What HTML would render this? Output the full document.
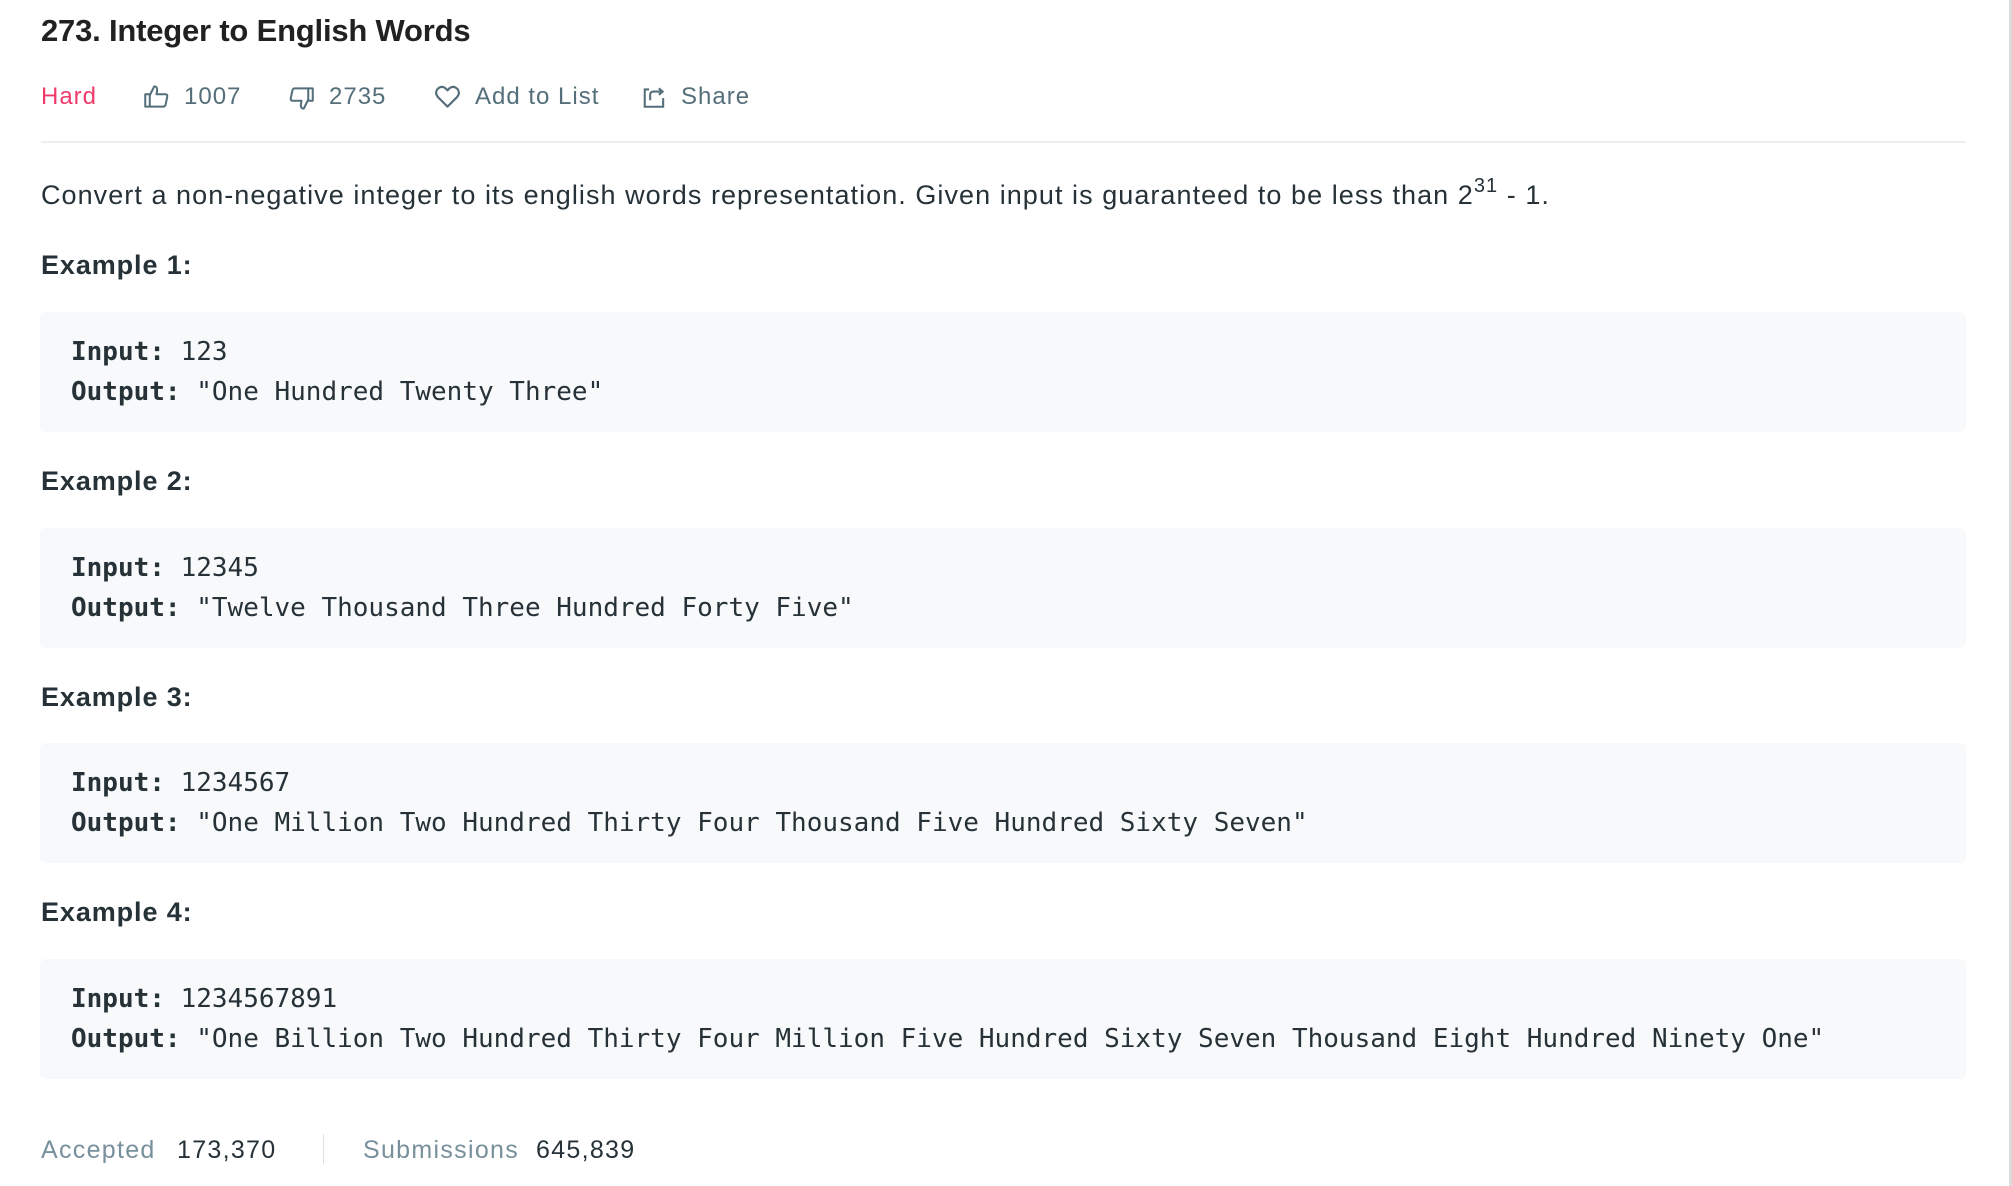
<!DOCTYPE html>
<html><head><meta charset="utf-8">
<style>
html,body{margin:0;padding:0;background:#fff;width:2012px;height:1186px;overflow:hidden;position:relative;font-family:"Liberation Sans",sans-serif;color:#263238}
.a{position:absolute;white-space:nowrap}
.title{left:41px;top:12px;font-size:31px;color:#212121;line-height:38px;font-weight:bold;letter-spacing:-0.2px}
.meta{top:82px;font-size:24px;color:#546e7a;line-height:30px;letter-spacing:1px}
.hard{color:#ef3a6a}
.div{position:absolute;left:41px;width:1925px;top:141px;height:2px;background:#eceff1}
.rb{position:absolute;left:2009px;top:0;width:3px;height:1186px;background:#dcdcdc}
.p{left:41px;top:177px;font-size:27px;line-height:36px;letter-spacing:1.05px}
.h{left:41px;font-size:27px;font-weight:bold;line-height:34px;letter-spacing:0.9px}
.box{position:absolute;left:40px;width:1926px;height:120px;background:#f7f9fa;border-radius:6px}
.code{position:absolute;left:31px;top:20px;font-family:"DejaVu Sans Mono","Liberation Mono",monospace;font-size:26px;line-height:40px;white-space:pre;color:#263238}
.code b{font-weight:bold}
.foot{top:1135px;font-size:25px;line-height:30px;letter-spacing:1.3px}
.g{color:#78909c}
svg{position:absolute}
</style></head><body>
<div class="rb"></div>
<div class="a title">273. Integer to English Words</div>
<div class="a meta hard" style="left:41px">Hard</div>
<svg style="left:143px;top:83px" width="27" height="27" viewBox="0 0 24 24" fill="none" stroke="#546e7a" stroke-width="1.8" stroke-linejoin="round"><rect x="2" y="10" width="4" height="11"/><path d="M6 11 L10 3 Q13 3 12.5 7 L12 10 H20 Q22 10 21.5 12.5 L20 19.5 Q19.5 21 18 21 H6"/></svg>
<div class="a meta" style="left:184px">1007</div>
<svg style="left:288px;top:85px" width="27" height="27" viewBox="0 0 24 24" fill="none" stroke="#546e7a" stroke-width="1.8" stroke-linejoin="round"><rect x="18" y="3" width="4" height="11"/><path d="M18 13 L14 21 Q11 21 11.5 17 L12 14 H4 Q2 14 2.5 11.5 L4 4.5 Q4.5 3 6 3 H18"/></svg>
<div class="a meta" style="left:329px">2735</div>
<svg style="left:434px;top:84px" width="27" height="25" viewBox="0 0 24 22" fill="none" stroke="#546e7a" stroke-width="1.9" stroke-linejoin="round"><path d="M12 20 L3.5 11.5 Q0.5 8 3 4.5 Q6.5 1 10 3.5 L12 5.5 L14 3.5 Q17.5 1 21 4.5 Q23.5 8 20.5 11.5 Z"/></svg>
<div class="a meta" style="left:475px">Add to List</div>
<svg style="left:641px;top:84px" width="27" height="26" viewBox="0 0 24 24" fill="none" stroke="#546e7a" stroke-width="1.9"><path d="M7 5 H3 V21 H20 V13"/><path d="M8 15 V10 Q8 7 11 7 H19"/><path d="M16 4 L19.5 7 L16 10"/></svg>
<div class="a meta" style="left:681px">Share</div>
<div class="div"></div>
<div class="a p">Convert a non-negative integer to its english words representation. Given input is guaranteed to be less than 2<sup style="font-size:20px;vertical-align:12px;line-height:0">31</sup> - 1.</div>

<div class="a h" style="top:248px">Example 1:</div>
<div class="box" style="top:312px"><div class="code"><b>Input:</b> 123
<b>Output:</b> "One Hundred Twenty Three"</div></div>

<div class="a h" style="top:464px">Example 2:</div>
<div class="box" style="top:528px"><div class="code"><b>Input:</b> 12345
<b>Output:</b> "Twelve Thousand Three Hundred Forty Five"</div></div>

<div class="a h" style="top:680px">Example 3:</div>
<div class="box" style="top:743px"><div class="code"><b>Input:</b> 1234567
<b>Output:</b> "One Million Two Hundred Thirty Four Thousand Five Hundred Sixty Seven"</div></div>

<div class="a h" style="top:895px">Example 4:</div>
<div class="box" style="top:959px"><div class="code"><b>Input:</b> 1234567891
<b>Output:</b> "One Billion Two Hundred Thirty Four Million Five Hundred Sixty Seven Thousand Eight Hundred Ninety One"</div></div>

<div class="a foot g" style="left:41px">Accepted</div>
<div class="a foot" style="left:177px">173,370</div>
<div style="position:absolute;left:323px;top:1134px;width:1px;height:30px;background:#e0e0e0"></div>
<div class="a foot g" style="left:363px">Submissions</div>
<div class="a foot" style="left:536px">645,839</div>
</body></html>
